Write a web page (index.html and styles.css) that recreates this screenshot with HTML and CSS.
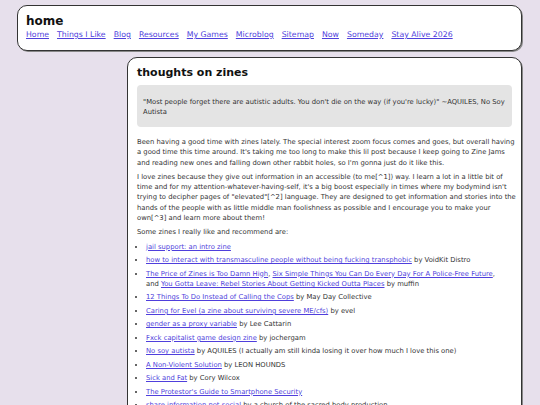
FILE: index.html
```html
<!DOCTYPE html>
<html lang="en">

<head>
  <meta charset="UTF-8" />
  <meta name="viewport" content="width=device-width, initial-scale=1.0" />
  <title>thoughts on zines</title>
  <link rel="stylesheet" href="styles.css">
</head>

<body>
  <div class="page">
    <header class="site_header">
      <h1 class="site_title">home</h1>
      <nav class="site_nav">
        <a href="#">Home</a>
        <a href="#">Things I Like</a>
        <a href="#">Blog</a>
        <a href="#">Resources</a>
        <a href="#">My Games</a>
        <a href="#">Microblog</a>
        <a href="#">Sitemap</a>
        <a href="#">Now</a>
        <a href="#">Someday</a>
        <a href="#">Stay Alive 2026</a>
      </nav>
    </header>

    <div class="layout">
      <aside class="sidebar"></aside>

      <main class="post_card">
        <h2 class="post_title">thoughts on zines</h2>

        <blockquote class="quote">
          "Most people forget there are autistic adults. You don't die on the way (if you're lucky)" ~AQUILES, No Soy
          Autista
        </blockquote>

        <p>Been having a good time with zines lately. The special interest zoom focus comes and goes, but overall having
          a good time this time around. It's taking me too long to make this lil post because I keep going to Zine Jams
          and reading new ones and falling down other rabbit holes, so I'm gonna just do it like this.</p>

        <p>I love zines because they give out information in an accessible (to me[^1]) way. I learn a lot in a little bit of
          time and for my attention-whatever-having-self, it's a big boost especially in times where my bodymind isn't
          trying to decipher pages of "elevated"[^2] language. They are designed to get information and stories into the
          hands of the people with as little middle man foolishness as possible and I encourage you to make your
          own[^3] and learn more about them!</p>

        <p>Some zines I really like and recommend are:</p>

        <ul class="zine_list">
          <li><a href="#">jail support: an intro zine</a></li>
          <li><a href="#">how to interact with transmasculine people without being fucking transphobic</a> by VoidKit Distro</li>
          <li><a href="#">The Price of Zines is Too Damn High</a>, <a href="#">Six Simple Things You Can Do Every Day For A Police-Free Future</a>,
            and <a href="#">You Gotta Leave: Rebel Stories About Getting Kicked Outta Places</a> by muffin</li>
          <li><a href="#">12 Things To Do Instead of Calling the Cops</a> by May Day Collective</li>
          <li><a href="#">Caring for Evel (a zine about surviving severe ME/cfs)</a> by evel</li>
          <li><a href="#">gender as a proxy variable</a> by Lee Cattarin</li>
          <li><a href="#">Fxck capitalist game design zine</a> by jochergam</li>
          <li><a href="#">No soy autista</a> by AQUILES (I actually am still kinda losing it over how much I love this one)</li>
          <li><a href="#">A Non-Violent Solution</a> by LEON HOUNDS</li>
          <li><a href="#">Sick and Fat</a> by Cory Wilcox</li>
          <li><a href="#">The Protestor's Guide to Smartphone Security</a></li>
          <li><a href="#">share information not social</a> by a church of the sacred body production</li>
        </ul>
      </main>
    </div>
  </div>
</body>

</html>
```

FILE: styles.css
```css
body {
  font-family: "DejaVu Sans", Verdana, sans-serif;
  background-color: #e7e0ec;
  color: #333;
  margin: 0;
}

a {
  color: #4f3fdc;
}

.page {
  padding: 5px 18px 0 17px;
}

.site_header {
  background-color: #fff;
  border: 1px solid #333;
  border-radius: 10px;
  box-shadow: 1px 1px 0 #888;
  padding: 8px 8px 10px;
}

.site_title {
  margin: 0;
  font-size: 12px;
  line-height: 14px;
  font-weight: bold;
  color: #111;
}

.site_nav {
  display: flex;
  gap: 8px;
  margin-top: 2px;
  font-size: 7.8px;
  line-height: 10px;
}

.layout {
  display: grid;
  grid-template-columns: 100px 1fr;
  gap: 10px;
  margin-top: 6px;
}

.post_card {
  background-color: #fff;
  border: 1px solid #333;
  border-radius: 10px;
  box-shadow: 1px 1px 0 #888;
  padding: 8px 4px 20px 9px;
  font-size: 6.8px;
  line-height: 10.3px;
}

.post_title {
  margin: 0 0 6px;
  font-size: 11px;
  line-height: 13px;
  font-weight: bold;
  color: #111;
}

.quote {
  margin: 0 5px 10px 0;
  padding: 12px 6px 10px;
  line-height: 10px;
  background-color: #e4e4e4;
  border-radius: 4px;
}

p {
  margin: 0 0 4px;
}

.zine_list {
  margin: 0 10px 0 0;
  padding-left: 9px;
}

.zine_list li {
  margin-bottom: 3.2px;
}
```
